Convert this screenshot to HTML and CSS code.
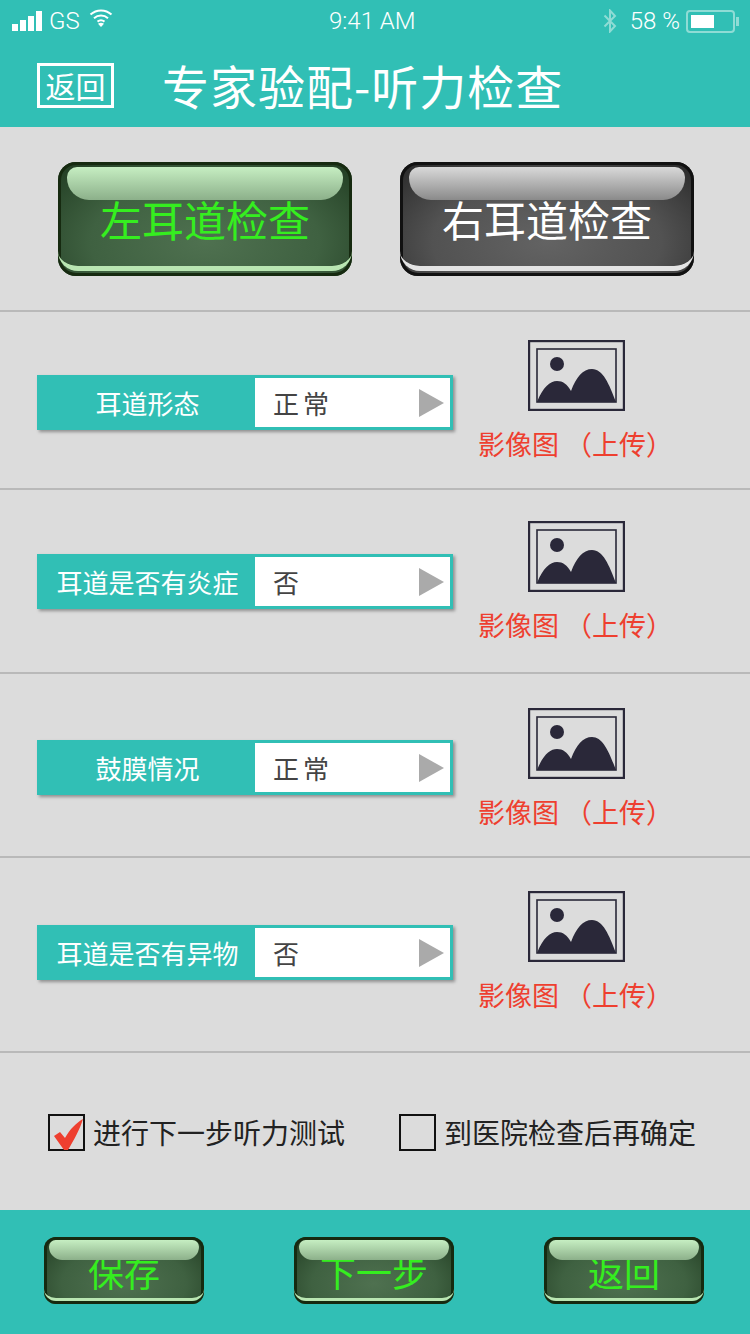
FILE: index.html
```html
<!DOCTYPE html>
<html lang="zh-CN">
<head>
    <meta charset="UTF-8">
    <meta name="viewport" content="width=device-width, initial-scale=1.0">
    <title>专家验配-听力检查</title>
    <link rel="stylesheet" href="styles.css">
</head>
<body>
    <svg class="svg-defs" width="0" height="0" aria-hidden="true">
        <symbol id="picture" viewBox="0 0 97 71">
            <rect x="1" y="1" width="95" height="69" fill="none" stroke="#2a2839" stroke-width="2.4"/>
            <rect x="9" y="9" width="79" height="53" fill="none" stroke="#2a2839" stroke-width="1.6"/>
            <circle cx="29" cy="24" r="7" fill="#2a2839"/>
            <path d="M9 62C15 47 22 41 29 41C35 41 39 44 43 51C48 37 55 29 64 29C75 29 81 44 88 62Z" fill="#2a2839"/>
        </symbol>
    </svg>

    <header class="top">
        <div class="status">
            <div class="status-left">
                <span class="signal"><i></i><i></i><i></i><i></i></span>
                <span>GS</span>
                <svg class="wifi" width="24" height="20" viewBox="0 0 24 20">
                    <path d="M1.5 6.5C7.5 1 16.5 1 22.5 6.5M5 10.2C9 6.6 15 6.6 19 10.2M8.5 13.6C10.6 11.9 13.4 11.9 15.5 13.6" fill="none" stroke="#fff" stroke-width="2"/>
                    <path d="M9 15.8L12 19L15 15.8C13 14.4 11 14.4 9 15.8Z" fill="#fff"/>
                </svg>
            </div>
            <div class="status-time">9:41 AM</div>
            <div class="status-right">
                <svg class="bluetooth" width="14" height="24" viewBox="0 0 14 24">
                    <path d="M1.5 6.5L12 17L7 22.5V1.5L12 7L1.5 17.5" fill="none" stroke="#8fdcd5" stroke-width="2"/>
                </svg>
                <span>58 %</span>
                <span class="battery"><i></i></span>
            </div>
        </div>
        <div class="navbar">
            <a class="back-link">返回</a>
            <h1>专家验配-听力检查</h1>
        </div>
    </header>

    <section class="ear-tabs">
        <button class="gloss gloss-green gloss-lg">左耳道检查</button>
        <button class="gloss gloss-grey gloss-lg">右耳道检查</button>
    </section>

    <section class="row row-1">
        <div class="field">
            <div class="field-label">耳道形态</div>
            <div class="field-value"><span class="wide">正常</span><i class="arrow"></i></div>
        </div>
        <div class="upload">
            <svg class="pic" width="97" height="71"><use href="#picture"/></svg>
            <div class="upload-text">影像图 （上传）</div>
        </div>
    </section>
    <section class="row row-2">
        <div class="field">
            <div class="field-label">耳道是否有炎症</div>
            <div class="field-value"><span>否</span><i class="arrow"></i></div>
        </div>
        <div class="upload">
            <svg class="pic" width="97" height="71"><use href="#picture"/></svg>
            <div class="upload-text">影像图 （上传）</div>
        </div>
    </section>
    <section class="row row-3">
        <div class="field">
            <div class="field-label">鼓膜情况</div>
            <div class="field-value"><span class="wide">正常</span><i class="arrow"></i></div>
        </div>
        <div class="upload">
            <svg class="pic" width="97" height="71"><use href="#picture"/></svg>
            <div class="upload-text">影像图 （上传）</div>
        </div>
    </section>
    <section class="row row-4">
        <div class="field">
            <div class="field-label">耳道是否有异物</div>
            <div class="field-value"><span>否</span><i class="arrow"></i></div>
        </div>
        <div class="upload">
            <svg class="pic" width="97" height="71"><use href="#picture"/></svg>
            <div class="upload-text">影像图 （上传）</div>
        </div>
    </section>

    <section class="checks">
        <div class="check check-first">
            <span class="box">
                <svg width="36" height="36" viewBox="0 0 36 36"><path d="M4 21L10 17L15 23C20 14 26 8 33 4C30 14 24 25 18 35H14Z" fill="#ee3f2f"/></svg>
            </span>
            进行下一步听力测试
        </div>
        <div class="check">
            <span class="box"></span>
            到医院检查后再确定
        </div>
    </section>

    <footer class="bottom">
        <button class="gloss gloss-green gloss-sm">保存</button>
        <button class="gloss gloss-green gloss-sm">下一步</button>
        <button class="gloss gloss-green gloss-sm">返回</button>
    </footer>
</body>
</html>
```

FILE: styles.css
```css
* {
    box-sizing: border-box;
}
html, body {
    margin: 0;
    padding: 0;
}
body {
    width: 750px;
    height: 1334px;
    overflow: hidden;
    background-color: #dcdcdc;
    font-family: "Noto Sans CJK SC", "Noto Sans", sans-serif;
}
.svg-defs {
    position: absolute;
}

/* header */
.top {
    height: 127px;
    background-color: #31bfb5;
    color: #fff;
}
.status {
    height: 42px;
    padding: 0 15px 0 12px;
    display: flex;
    align-items: center;
    justify-content: space-between;
    font-family: Roboto, sans-serif;
    font-weight: 300;
    font-size: 24px;
    position: relative;
}
.status-left, .status-right {
    display: flex;
    align-items: center;
}
.status-left span + span {
    margin-left: 7px;
}
.signal {
    display: flex;
    align-items: flex-end;
    gap: 2px;
    height: 20px;
}
.signal i {
    display: block;
    width: 6px;
    background-color: #fff;
}
.signal i:nth-child(1) { height: 7px; }
.signal i:nth-child(2) { height: 11px; }
.signal i:nth-child(3) { height: 15px; }
.signal i:nth-child(4) { height: 20px; }
.wifi {
    margin-left: 9px;
    margin-top: -6px;
}
.status-time {
    position: absolute;
    left: 329px;
    top: 7px;
}
.bluetooth {
    margin-right: 13px;
}
.battery {
    width: 49px;
    height: 23px;
    margin-left: 6px;
    border: 2px solid #8fdcd5;
    border-radius: 4px;
    padding: 3px;
    position: relative;
}
.battery i {
    display: block;
    width: 23px;
    height: 13px;
    background-color: #fff;
}
.battery::after {
    content: "";
    position: absolute;
    right: -6px;
    top: 5px;
    width: 3px;
    height: 9px;
    background-color: #8fdcd5;
}
.navbar {
    height: 85px;
    padding-left: 37px;
    display: flex;
    align-items: center;
}
.back-link {
    width: 77px;
    height: 45px;
    border: 3px solid #fff;
    font-size: 30px;
    line-height: 39px;
    text-align: center;
    white-space: nowrap;
    margin-top: 2px;
}
.navbar h1 {
    margin: 0 0 0 48px;
    font-size: 47px;
    font-weight: 400;
    line-height: 60px;
    letter-spacing: 1px;
    white-space: nowrap;
}

/* glossy buttons */
.gloss {
    position: relative;
    padding: 0;
    border: 0;
    font-family: "Noto Sans CJK SC", sans-serif;
    cursor: pointer;
    overflow: hidden;
}
.gloss::before {
    content: "";
    position: absolute;
    background: linear-gradient(to bottom, var(--gloss-top), var(--gloss-bottom));
}
.gloss::after {
    content: "";
    position: absolute;
    left: 0;
    right: 0;
    border-style: solid;
    border-color: transparent;
    border-bottom-color: var(--lip);
}
.gloss-green {
    --gloss-top: #c6eec2;
    --gloss-bottom: #8cb08a;
    --lip: #b9e6b2;
    color: #35ee1f;
    background: radial-gradient(ellipse at 50% 70%, #4f7150 0%, #3f6141 55%, #1f3a20 100%);
    box-shadow: inset 0 0 0 3px #162a10;
}
.gloss-grey {
    --gloss-top: #d9d9d9;
    --gloss-bottom: #8a8a8a;
    --lip: #e4e4e4;
    color: #fff;
    background: radial-gradient(ellipse at 50% 70%, #636363 0%, #525252 55%, #262626 100%);
    box-shadow: inset 0 0 0 3px #111;
}
.gloss-lg {
    width: 294px;
    height: 114px;
    border-radius: 18px;
    font-size: 42px;
    line-height: 110px;
    letter-spacing: 0;
}
.gloss-lg::before {
    left: 9px;
    right: 9px;
    top: 5px;
    height: 33px;
    border-radius: 10px 10px 22px 22px;
}
.gloss-lg::after {
    bottom: 5px;
    height: 22px;
    border-width: 0 0 5px;
    border-radius: 0 0 20px 20px;
}
.gloss-sm {
    width: 160px;
    height: 67px;
    border-radius: 12px;
    font-size: 36px;
    line-height: 62px;
}
.gloss-sm::before {
    left: 5px;
    right: 5px;
    top: 3px;
    height: 20px;
    border-radius: 7px 7px 14px 14px;
}
.gloss-sm::after {
    bottom: 3px;
    height: 14px;
    border-width: 0 0 3px;
    border-radius: 0 0 12px 12px;
}

.ear-tabs {
    height: 185px;
    padding: 35px 56px 0 58px;
    display: flex;
    justify-content: space-between;
    align-items: flex-start;
    border-bottom: 2px solid #b9b9b9;
}

/* check rows */
.row {
    display: flex;
    align-items: flex-start;
    padding-left: 37px;
    border-bottom: 2px solid #b9b9b9;
}
.row-1 { height: 178px; }
.row-2 { height: 184px; }
.row-3 { height: 184px; }
.row-4 { height: 195px; }
.row-1 .field { margin-top: 63px; }
.row-2 .field { margin-top: 64px; }
.row-3 .field { margin-top: 66px; }
.row-4 .field { margin-top: 67px; }
.row-1 .upload { margin-top: 28px; }
.row-2 .upload { margin-top: 31px; }
.row-3 .upload { margin-top: 34px; }
.row-4 .upload { margin-top: 33px; }

.field {
    width: 416px;
    height: 55px;
    padding: 3px;
    display: flex;
    background-color: #31bfb5;
    box-shadow: 2px 2px 3px rgba(0,0,0,0.35);
}
.field-label {
    width: 215px;
    color: #fff;
    font-size: 26px;
    line-height: 49px;
    text-align: center;
    white-space: nowrap;
}
.field-value {
    flex: 1;
    padding: 0 6px 0 18px;
    display: flex;
    align-items: center;
    justify-content: space-between;
    background-color: #fff;
    color: #444;
    font-size: 26px;
}
.field-value .wide {
    letter-spacing: 4px;
}
.arrow {
    display: block;
    width: 0;
    height: 0;
    border-style: solid;
    border-width: 14.5px 0 14.5px 25px;
    border-color: transparent transparent transparent #aaa;
}
.upload {
    margin-left: 25px;
    width: 220px;
    display: flex;
    flex-direction: column;
}
.pic {
    display: block;
    margin-left: 50px;
}
.upload-text {
    margin-top: 13px;
    color: #ee3f2f;
    font-size: 27px;
    line-height: 40px;
    white-space: nowrap;
}

/* bottom */
.checks {
    height: 157px;
    padding: 60px 0 0 48px;
    display: flex;
    align-items: flex-start;
}
.check {
    display: flex;
    align-items: center;
    font-size: 28px;
    line-height: 38px;
    color: #222;
    white-space: nowrap;
}
.check-first {
    width: 351px;
}
.box {
    width: 37px;
    height: 37px;
    margin-right: 8px;
    border: 2px solid #111;
    position: relative;
}
.box svg {
    position: absolute;
    left: 0;
    top: -1px;
}
.bottom {
    height: 125px;
    padding: 27px 46px 0 44px;
    display: flex;
    justify-content: space-between;
    align-items: flex-start;
    background-color: #31bfb5;
}
```
